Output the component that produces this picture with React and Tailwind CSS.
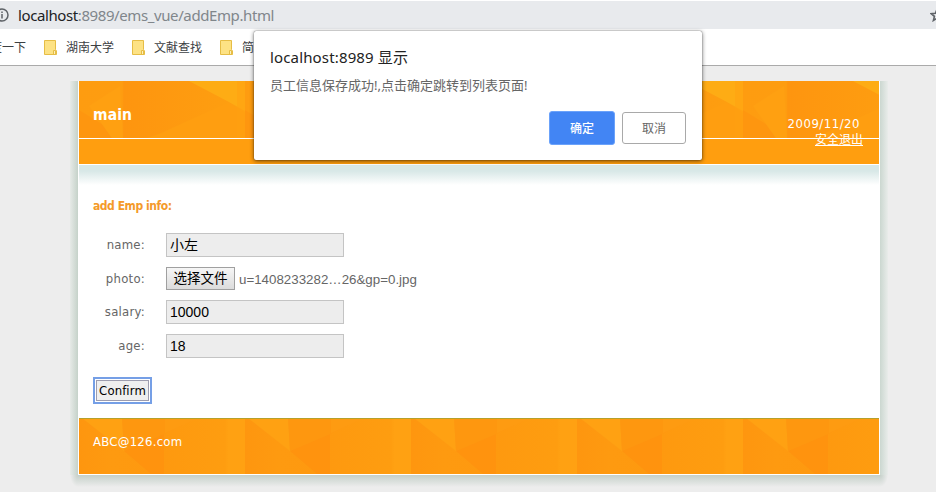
import React from "react";

const tahoma = "font-['DejaVu_Sans_Condensed','DejaVu_Sans','Noto_Sans_CJK_SC',sans-serif] [font-stretch:condensed]";
const segoe = "font-['Noto_Sans','Noto_Sans_CJK_SC',sans-serif] [font-stretch:normal]";
const arial = "font-['Liberation_Sans','Noto_Sans_CJK_SC',sans-serif] [font-stretch:normal]";

function HeaderPattern() {
  return (
    <svg className="absolute inset-0" width="800" height="57">
      <defs>
        <linearGradient id="headBase" x1="0" x2="1" y1="0" y2="0">
          <stop offset="0" stopColor="#fe9c10" />
          <stop offset="0.26" stopColor="#fe9d10" />
          <stop offset="0.27" stopColor="#fe950f" />
          <stop offset="0.9" stopColor="#fe9e10" />
          <stop offset="1" stopColor="#ffa211" />
        </linearGradient>
        <pattern id="head" width="166" height="57" patternUnits="userSpaceOnUse">
          <rect width="166" height="57" fill="url(#headBase)" />
          <path d="M0 29L23 43L33 57H0Z" fill="#fe960f" />
          <path d="M10 25L41 5L44 57H33L23 43Z" fill="#ffa011" />
          <path d="M150 21L80 53L68 57H166V32Z" fill="#ff9e10" />
          <path d="M110 0H166V30L150 21Z" fill="#feac14" />
          <path d="M158 0H166V57H158Z" fill="#ff9f10" fillOpacity="0.5" />
        </pattern>
      </defs>
      <rect width="800" height="57" fill="url(#head)" />
    </svg>
  );
}

function FooterPattern() {
  return (
    <svg className="absolute inset-0" width="800" height="56">
      <defs>
        <linearGradient id="footBase" x1="0" x2="1" y1="0" y2="0">
          <stop offset="0" stopColor="#fe960f" />
          <stop offset="0.2" stopColor="#fe9a10" />
          <stop offset="0.5" stopColor="#fe990f" />
          <stop offset="0.88" stopColor="#fe9d10" />
          <stop offset="0.9" stopColor="#ffa112" />
          <stop offset="1" stopColor="#ffa112" />
        </linearGradient>
        <pattern id="foot" width="166" height="56" patternUnits="userSpaceOnUse">
          <rect width="166" height="56" fill="url(#footBase)" />
          <path d="M3 0H43L45 33Z" fill="#ffa112" />
          <path d="M43 0H118L85 16L45 33Z" fill="#fe970f" />
          <path d="M45 33L85 16V56H72Z" fill="#ff930e" />
          <path d="M86 0H119L86 15Z" fill="#fe9b11" />
        </pattern>
      </defs>
      <rect width="800" height="56" fill="url(#foot)" />
      <rect width="800" height="1" fill="#b5a02c" />
    </svg>
  );
}

function Folder() {
  return (
    <svg width="13" height="15" className="block shrink-0">
      <path d="M.5.5H11.5V9.5L12.5 11V14.5H.5Z" fill="#fde284" stroke="#e6bd45" />
      <path d="M9.5 14V10.5H11.5V14" fill="#fdf0bc" stroke="#e6bd45" />
    </svg>
  );
}

function Bookmark({ label }) {
  return (
    <div className="flex w-[88px] shrink-0 items-center">
      <Folder />
      <span className="ml-[9px] whitespace-nowrap pt-[2px]">{label}</span>
    </div>
  );
}

function Field({ label, children }) {
  return (
    <div className="flex h-[33.7px] items-start">
      <span className="mt-[3px] w-[66px] shrink-0 text-right text-[13px] leading-[18px] tracking-[0.25px] text-[#666]">{label}</span>
      <div className="ml-[21px]">{children}</div>
    </div>
  );
}

function TextBox({ value }) {
  return (
    <div className={`${arial} h-6 w-[178px] border border-[#c4c4c4] bg-[#ededed] pl-[3px] text-[14px] leading-[23px] text-black`}>
      {value}
    </div>
  );
}

function Dialog() {
  return (
    <div className={`${segoe} absolute left-[254px] top-[31px] flex h-[129px] w-[448px] flex-col rounded-[2px] bg-white px-4 shadow-[0_0_1px_rgba(0,0,0,0.7),0_1px_4px_rgba(0,0,0,0.6)]`}>
      <div className="mt-[16px] whitespace-nowrap text-[15px] leading-[20px] tracking-[0.15px] text-[#222]">localhost:8989 显示</div>
      <div className="mt-[8px] whitespace-nowrap text-[13px] leading-[20px] text-[#666]">员工信息保存成功!,点击确定跳转到列表页面!</div>
      <div className="mt-[16px] flex justify-end gap-[7px]">
        <button className="h-[34px] w-[66px] rounded-[3px] border border-[#6ba2fa] bg-[#4285f4] pt-px text-[12px] font-medium leading-[32px] text-white">确定</button>
        <button className="mt-px h-8 w-16 rounded-[3px] border border-[#a9a9a9] bg-white pt-px text-[12px] leading-[30px] text-[#666]">取消</button>
      </div>
    </div>
  );
}

export default function App() {
  return (
    <div className={`${tahoma} relative flex h-[492px] w-[936px] flex-col overflow-hidden bg-[#ededed]`}>
      <div className="flex h-[29px] shrink-0 items-center border-t border-white bg-[#e8eaed]">
        <svg width="18" height="16" className="shrink-0">
          <circle cx="2" cy="8" r="6" fill="none" stroke="#5f6368" strokeWidth="1.5" />
          <path d="M2 7V11.5M2 4.5V6" stroke="#5f6368" strokeWidth="1.5" />
        </svg>
        <span className={`${segoe} -mt-px grow whitespace-nowrap text-[15px] leading-[20px] tracking-[-0.4px] text-[#80868b]`}>
          <span className="text-[#202124]">localhost</span>:8989/ems_vue/addEmp.html
        </span>
        <svg width="6" height="14" className="shrink-0">
          <path d="M7 1.5L5.4 5.3L1.2 5.7L4.4 8.4L3.4 12.5L7 10.3" fill="none" stroke="#5f6368" strokeWidth="1.6" />
        </svg>
      </div>
      <div className={`${segoe} flex h-[37px] shrink-0 items-center overflow-hidden border-b border-[#aaa] bg-white text-[12px] text-[#3c4043]`}>
        <span className="-ml-[10px] w-[54px] shrink-0 whitespace-nowrap pt-[2px]">度一下</span>
        <Bookmark label="湖南大学" />
        <Bookmark label="文献查找" />
        <Bookmark label="简书" />
      </div>

      <div className="ml-[70px] mt-[15px] flex w-[818px] shrink-0 flex-col">
        <div className="flex h-[394px] shrink-0">
          <div className="w-2 shrink-0 bg-linear-to-r from-[#e6eae7] to-[#c5d2c9]" />
          <div className="flex w-[802px] shrink-0 flex-col border-x border-b border-white bg-white">
            <header className="relative h-[57px] shrink-0 text-white">
              <HeaderPattern />
              <div className="relative flex justify-between pl-[14px] pr-[16px]">
                <h1 className="mt-[25px] text-[15.5px] font-bold leading-[18px] tracking-[0.1px]">main</h1>
                <div className="z-10 mt-[35px] flex flex-col items-end">
                  <span className="mr-[3px] text-[13px] leading-[16px] tracking-[0.5px]">2009/11/20</span>
                  <a className="text-[12px] leading-[16px] underline">安全退出</a>
                </div>
              </div>
            </header>
            <div className="h-[27px] shrink-0 border-y border-white bg-[#ff9e0f]" />
            <div className="h-[20px] shrink-0 bg-linear-to-b from-[#d8e8e7] from-30% to-white" />
            <main className="h-[233px] shrink-0 pt-[13px]">
              <h2 className="ml-[14px] text-[12px] font-bold leading-[16px] tracking-[-0.45px] text-[#f49a2a]">add Emp info:</h2>
              <div className="mt-[19px]">
                <Field label="name:"><TextBox value="小左" /></Field>
                <Field label="photo:">
                  <div className={`${arial} flex items-start text-[14px] text-[#666]`}>
                    <button className="h-[23px] w-[69px] border border-[#a0a0a0] bg-linear-to-b from-[#f6f6f6] to-[#dcdcdc] text-[13.5px] leading-[22px] text-black">选择文件</button>
                    <span className="ml-1 whitespace-nowrap pt-px text-[13.33px] leading-[24px]">u=1408233282…26&amp;gp=0.jpg</span>
                  </div>
                </Field>
                <Field label="salary:"><TextBox value="10000" /></Field>
                <Field label="age:"><TextBox value="18" /></Field>
              </div>
              <button className="ml-[14px] mt-[9px] block h-[27px] w-[59px] border-2 border-[#759fe6] bg-white p-px">
                <span className="block h-[21px] border border-[#9d9daf] bg-[#efefef] text-center text-[13px] leading-[20px] tracking-[0.1px] text-black">Confirm</span>
              </button>
            </main>
            <footer className="relative h-[56px] shrink-0 text-white">
              <FooterPattern />
              <span className="relative ml-[14px] block pt-[15px] text-[13px] leading-[18px] tracking-[0.25px]">ABC@126.com</span>
            </footer>
          </div>
          <div className="w-2 shrink-0 bg-linear-to-r from-[#cbd7d0] to-[#e9ecea]" />
        </div>
        <div className="flex h-3 shrink-0">
          <div className="w-2 bg-[radial-gradient(ellipse_8px_12px_at_100%_0%,#c5d0c9,#ededed)]" />
          <div className="grow bg-linear-to-b from-[#c5d0c9] to-[#ededed]" />
          <div className="w-2 bg-[radial-gradient(ellipse_8px_12px_at_0%_0%,#c5d0c9,#ededed)]" />
        </div>
      </div>
      <Dialog />
    </div>
  );
}
